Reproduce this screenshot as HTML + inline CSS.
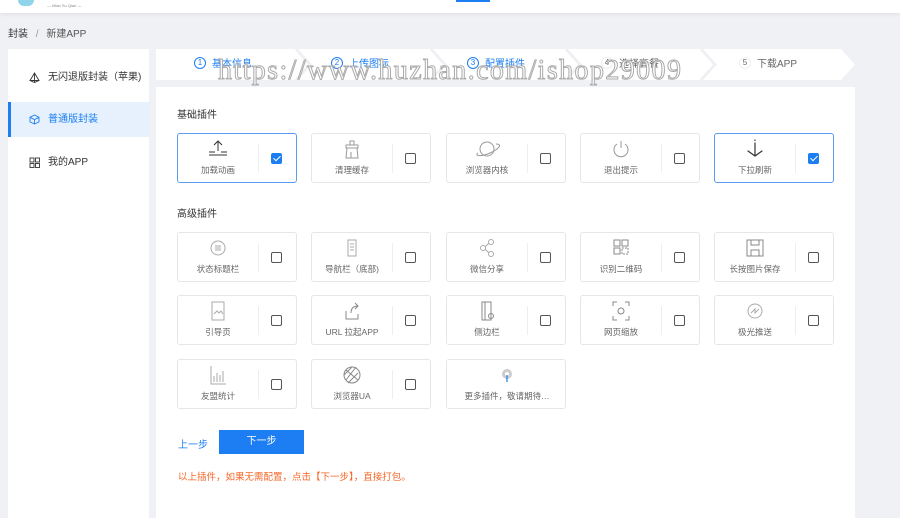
<!DOCTYPE html>
<html><head><meta charset="utf-8"><style>
*{margin:0;padding:0;box-sizing:border-box}
body{width:900px;height:518px;overflow:hidden;background:#f0f1f4;font-family:"Liberation Sans","Noto Sans CJK SC",sans-serif;color:#333;position:relative}
.hdr{position:absolute;left:0;top:0;width:900px;height:13px;background:#fff;box-shadow:0 1px 4px rgba(0,0,0,.08)}
.abs{position:absolute}
.side{left:8px;top:49px;width:141px;height:469px;background:#fff}
.si{position:absolute;left:0;width:141px;height:36px;font-size:10px;line-height:36px;padding-left:40px;color:#333}
.si svg{position:absolute;left:21px;top:12px}
.steps{left:156px;top:49px;width:699px;height:31px;background:#fff}
.st{position:absolute;top:0;font-size:10px;line-height:31px;color:#666}
.st b{display:inline-block;width:12px;height:12px;border-radius:50%;border:1px solid #bbb;font-weight:normal;font-size:8px;line-height:10px;text-align:center;margin-right:6px;vertical-align:middle;margin-top:-2px}
.st.a{color:#1c7ef2}.st.a b{border-color:#1c7ef2}
.main{left:156px;top:87px;width:699px;height:431px;background:#fff}
.h{position:absolute;font-size:10px;color:#333}
.c{position:absolute;width:120px;height:50px;border:1px solid #e6e6e6;border-radius:3px;background:#fff}
.c.on{border-color:#5b9cf0}
.c .ic{position:absolute;left:26px;top:5px;width:28px;height:20px}
.c .t{position:absolute;left:0;width:80px;top:30px;text-align:center;font-size:8.5px;color:#666;white-space:nowrap}
.c .d{position:absolute;left:80px;top:10px;width:1px;height:29px;background:#eee}
.c .k{position:absolute;left:93px;top:19px;width:11px;height:11px;border:1px solid #555;border-radius:2px}
.c.on .k{background:#1c7ef2;border-color:#1c7ef2}
.c.on .k:after{content:"";position:absolute;left:3px;top:0px;width:3px;height:6px;border:solid #fff;border-width:0 1.5px 1.5px 0;transform:rotate(45deg)}
.wm{left:218px;top:55px;font-family:"Liberation Serif",serif;font-size:28px;color:#fff;-webkit-text-stroke:1px #aaa;letter-spacing:1.4px;white-space:nowrap}
</style></head><body>
<div class="hdr"><div class="abs" style="left:47px;top:3px;font-size:4px;color:#888">— Miao Su Qian —</div><div class="abs" style="left:456px;top:0;width:34px;height:2px;background:#1c7ef2"></div><div class="abs" style="left:18px;top:0;width:16px;height:6px;border-radius:0 0 8px 8px;background:#8fd4ea"></div></div>
<div class="abs" style="left:8px;top:25px;font-size:10px;color:#333">封装 <span style="color:#999;margin:0 5px">/</span> <span style="color:#555">新建APP</span></div>
<div class="abs side">
<div class="si" style="top:11px"><svg width="11" height="11" viewBox="0 0 11 11" fill="none" stroke="#333" stroke-width="0.9"><path d="M5.5 1L1 8.5h9zM5.5 1v9.5M1 8.5l4.5 2 4.5-2"/></svg>无闪退版封装（苹果)</div>
<div class="si" style="top:53px;background:#e6f1fd;color:#1c7ef2;border-left:3px solid #1c7ef2;padding-left:37px;height:35px"><svg style="left:18px" width="11" height="11" viewBox="0 0 11 11" fill="none" stroke="#1c7ef2" stroke-width="0.9"><path d="M5.5 1L10 3.3v4.6L5.5 10 1 7.9V3.3zM1 3.3l4.5 2.3L10 3.3M5.5 5.6V10"/></svg>普通版封装</div>
<div class="si" style="top:96px"><svg width="11" height="11" viewBox="0 0 11 11" fill="none" stroke="#333" stroke-width="0.9"><rect x="1" y="1" width="4" height="4"/><rect x="6.5" y="1" width="4" height="4"/><rect x="1" y="6.5" width="4" height="4"/><rect x="6.5" y="6.5" width="4" height="4"/></svg>我的APP</div>
</div>
<div class="abs steps">
<svg class="abs" style="left:0;top:0" width="699" height="31"><g fill="none" stroke="#eef0f3" stroke-width="3"><path d="M140 0l14 15.5L140 31M275 0l14 15.5L275 31M410 0l14 15.5L410 31M545 0l14 15.5L545 31"/></g><path d="M685 0l14 15.5L685 31H699V0z" fill="#f0f1f4"/></svg>
<div class="st a" style="left:38px"><b>1</b>基本信息</div>
<div class="st a" style="left:175px"><b>2</b>上传图标</div>
<div class="st a" style="left:311px"><b>3</b>配置插件</div>
<div class="st" style="left:445px"><b style="border-color:#eee">4</b>选择套餐</div>
<div class="st" style="left:583px"><b style="border-color:#eee">5</b>下载APP</div>
</div>
<div class="abs wm">https://www.huzhan.com/ishop29009</div>
<div class="abs main">
<div class="h" style="left:21px;top:19px">基础插件</div>
<div class="h" style="left:21px;top:118px">高级插件</div>
</div>
<div class="c on" style="left:177px;top:133px"><svg class="ic" viewBox="0 0 28 20" fill="none" stroke="#333" stroke-width="1"><path d="M14 2v10M10 6l4-4 4 4M5 13h6M17 13h6M5 16h18"/></svg><div class="t">加载动画</div><div class="d"></div><div class="k"></div></div>
<div class="c" style="left:311px;top:133px"><svg class="ic" viewBox="0 0 28 20" fill="none" stroke="#999" stroke-width="1"><path d="M12 2h4v4h-4zM8 6h12v3H8zM9 9l-1 10h12l-1-10M13 13v6"/></svg><div class="t">清理缓存</div><div class="d"></div><div class="k"></div></div>
<div class="c" style="left:446px;top:133px"><svg class="ic" viewBox="0 0 28 20" fill="none" stroke="#999" stroke-width="1"><circle cx="14" cy="10" r="7"/><path d="M5 14c-4 3 3 4 12 0s13-9 6-9"/></svg><div class="t">浏览器内核</div><div class="d"></div><div class="k"></div></div>
<div class="c" style="left:580px;top:133px"><svg class="ic" viewBox="0 0 28 20" fill="none" stroke="#999" stroke-width="1"><path d="M14 2v7M10 5a7 7 0 1 0 8 0"/></svg><div class="t">退出提示</div><div class="d"></div><div class="k"></div></div>
<div class="c on" style="left:714px;top:133px"><svg class="ic" viewBox="0 0 28 20" fill="none" stroke="#333" stroke-width="1.2"><path d="M14 1v0.5M14 4v13M7 12l7 5 7-5" stroke-linecap="round"/></svg><div class="t">下拉刷新</div><div class="d"></div><div class="k"></div></div>

<div class="c" style="left:177px;top:232px"><svg class="ic" viewBox="0 0 28 20" fill="none" stroke="#aaa" stroke-width="1"><circle cx="14" cy="10" r="7"/><path d="M11 8h6M11 10h6M11 12h6"/></svg><div class="t">状态标题栏</div><div class="d"></div><div class="k"></div></div>
<div class="c" style="left:311px;top:232px"><svg class="ic" viewBox="0 0 28 20" fill="none" stroke="#aaa" stroke-width="1"><path d="M10 2h8v16h-8zM12 6h4M12 9h4M12 12h4"/></svg><div class="t">导航栏（底部)</div><div class="d"></div><div class="k"></div></div>
<div class="c" style="left:446px;top:232px"><svg class="ic" viewBox="0 0 28 20" fill="none" stroke="#aaa" stroke-width="1"><circle cx="10" cy="10" r="2.5"/><circle cx="18" cy="4" r="2.5"/><circle cx="18" cy="16" r="2.5"/><path d="M12 9l4-4M12 11l4 4"/></svg><div class="t">微信分享</div><div class="d"></div><div class="k"></div></div>
<div class="c" style="left:580px;top:232px"><svg class="ic" viewBox="0 0 28 20" fill="none" stroke="#888" stroke-width="1"><rect x="7" y="2" width="6" height="6"/><rect x="15" y="2" width="6" height="6"/><rect x="7" y="10" width="6" height="6"/><path d="M15 10h6v6h-6z" stroke-dasharray="2 1"/></svg><div class="t">识别二维码</div><div class="d"></div><div class="k"></div></div>
<div class="c" style="left:714px;top:232px"><svg class="ic" viewBox="0 0 28 20" fill="none" stroke="#888" stroke-width="1"><path d="M6 2h16v16H6zM10 2v5h8V2M10 18v-6h8v6"/></svg><div class="t">长按图片保存</div><div class="d"></div><div class="k"></div></div>

<div class="c" style="left:177px;top:295px"><svg class="ic" viewBox="0 0 28 20" fill="none" stroke="#aaa" stroke-width="1"><path d="M8 1h12v18H8zM10 13l3-3 2 2 2-2 2 3"/></svg><div class="t">引导页</div><div class="d"></div><div class="k"></div></div>
<div class="c" style="left:311px;top:295px"><svg class="ic" viewBox="0 0 28 20" fill="none" stroke="#888" stroke-width="1"><path d="M8 10v8h12v-5M13 12c0-5 3-7 7-7M17 2l3 3-3 3"/></svg><div class="t">URL 拉起APP</div><div class="d"></div><div class="k"></div></div>
<div class="c" style="left:446px;top:295px"><svg class="ic" viewBox="0 0 28 20" fill="none" stroke="#888" stroke-width="1"><path d="M9 1h9v18H9zM12 1v18"/><circle cx="18" cy="15" r="2.5"/></svg><div class="t">侧边栏</div><div class="d"></div><div class="k"></div></div>
<div class="c" style="left:580px;top:295px"><svg class="ic" viewBox="0 0 28 20" fill="none" stroke="#888" stroke-width="1"><path d="M6 5V1h4M18 1h4v4M22 15v4h-4M10 19H6v-4"/><circle cx="14" cy="10" r="3"/></svg><div class="t">网页缩放</div><div class="d"></div><div class="k"></div></div>
<div class="c" style="left:714px;top:295px"><svg class="ic" viewBox="0 0 28 20" fill="none" stroke="#aaa" stroke-width="1"><circle cx="14" cy="10" r="7"/><path d="M10 12l4-4v4l4-4"/></svg><div class="t">极光推送</div><div class="d"></div><div class="k"></div></div>

<div class="c" style="left:177px;top:359px"><svg class="ic" viewBox="0 0 28 20" fill="none" stroke="#aaa" stroke-width="1"><path d="M7 1v18h15M10 17v-6M13 17v-9M16 17v-7M19 17v-11"/></svg><div class="t">友盟统计</div><div class="d"></div><div class="k"></div></div>
<div class="c" style="left:311px;top:359px"><svg class="ic" viewBox="0 0 28 20" fill="none" stroke="#888" stroke-width="1"><circle cx="14" cy="10" r="8"/><path d="M8 5l12 10M6 10l8-8M10 18l10-10M8 15l10-13"/></svg><div class="t">浏览器UA</div><div class="d"></div><div class="k"></div></div>
<div class="c" style="left:446px;top:359px"><svg class="abs" style="left:50px;top:6px" width="20" height="18" viewBox="0 0 20 18"><circle cx="10" cy="8" r="5" fill="#ccc"/><circle cx="10" cy="8" r="2" fill="#fff"/><path d="M10 9v7" stroke="#1c7ef2" stroke-width="1.2"/></svg><div class="t" style="width:120px">更多插件，敬请期待…</div></div>

<div class="abs" style="left:178px;top:436px;font-size:10px;color:#1c7ef2">上一步</div>
<div class="abs" style="left:219px;top:430px;width:85px;height:24px;background:#1c7ef2;color:#fff;font-size:10px;line-height:24px;text-align:center">下一步</div>
<div class="abs" style="left:178px;top:469px;font-size:9.5px;color:#f5682a">以上插件，如果无需配置，点击【下一步】，直接打包。</div>
</body></html>
